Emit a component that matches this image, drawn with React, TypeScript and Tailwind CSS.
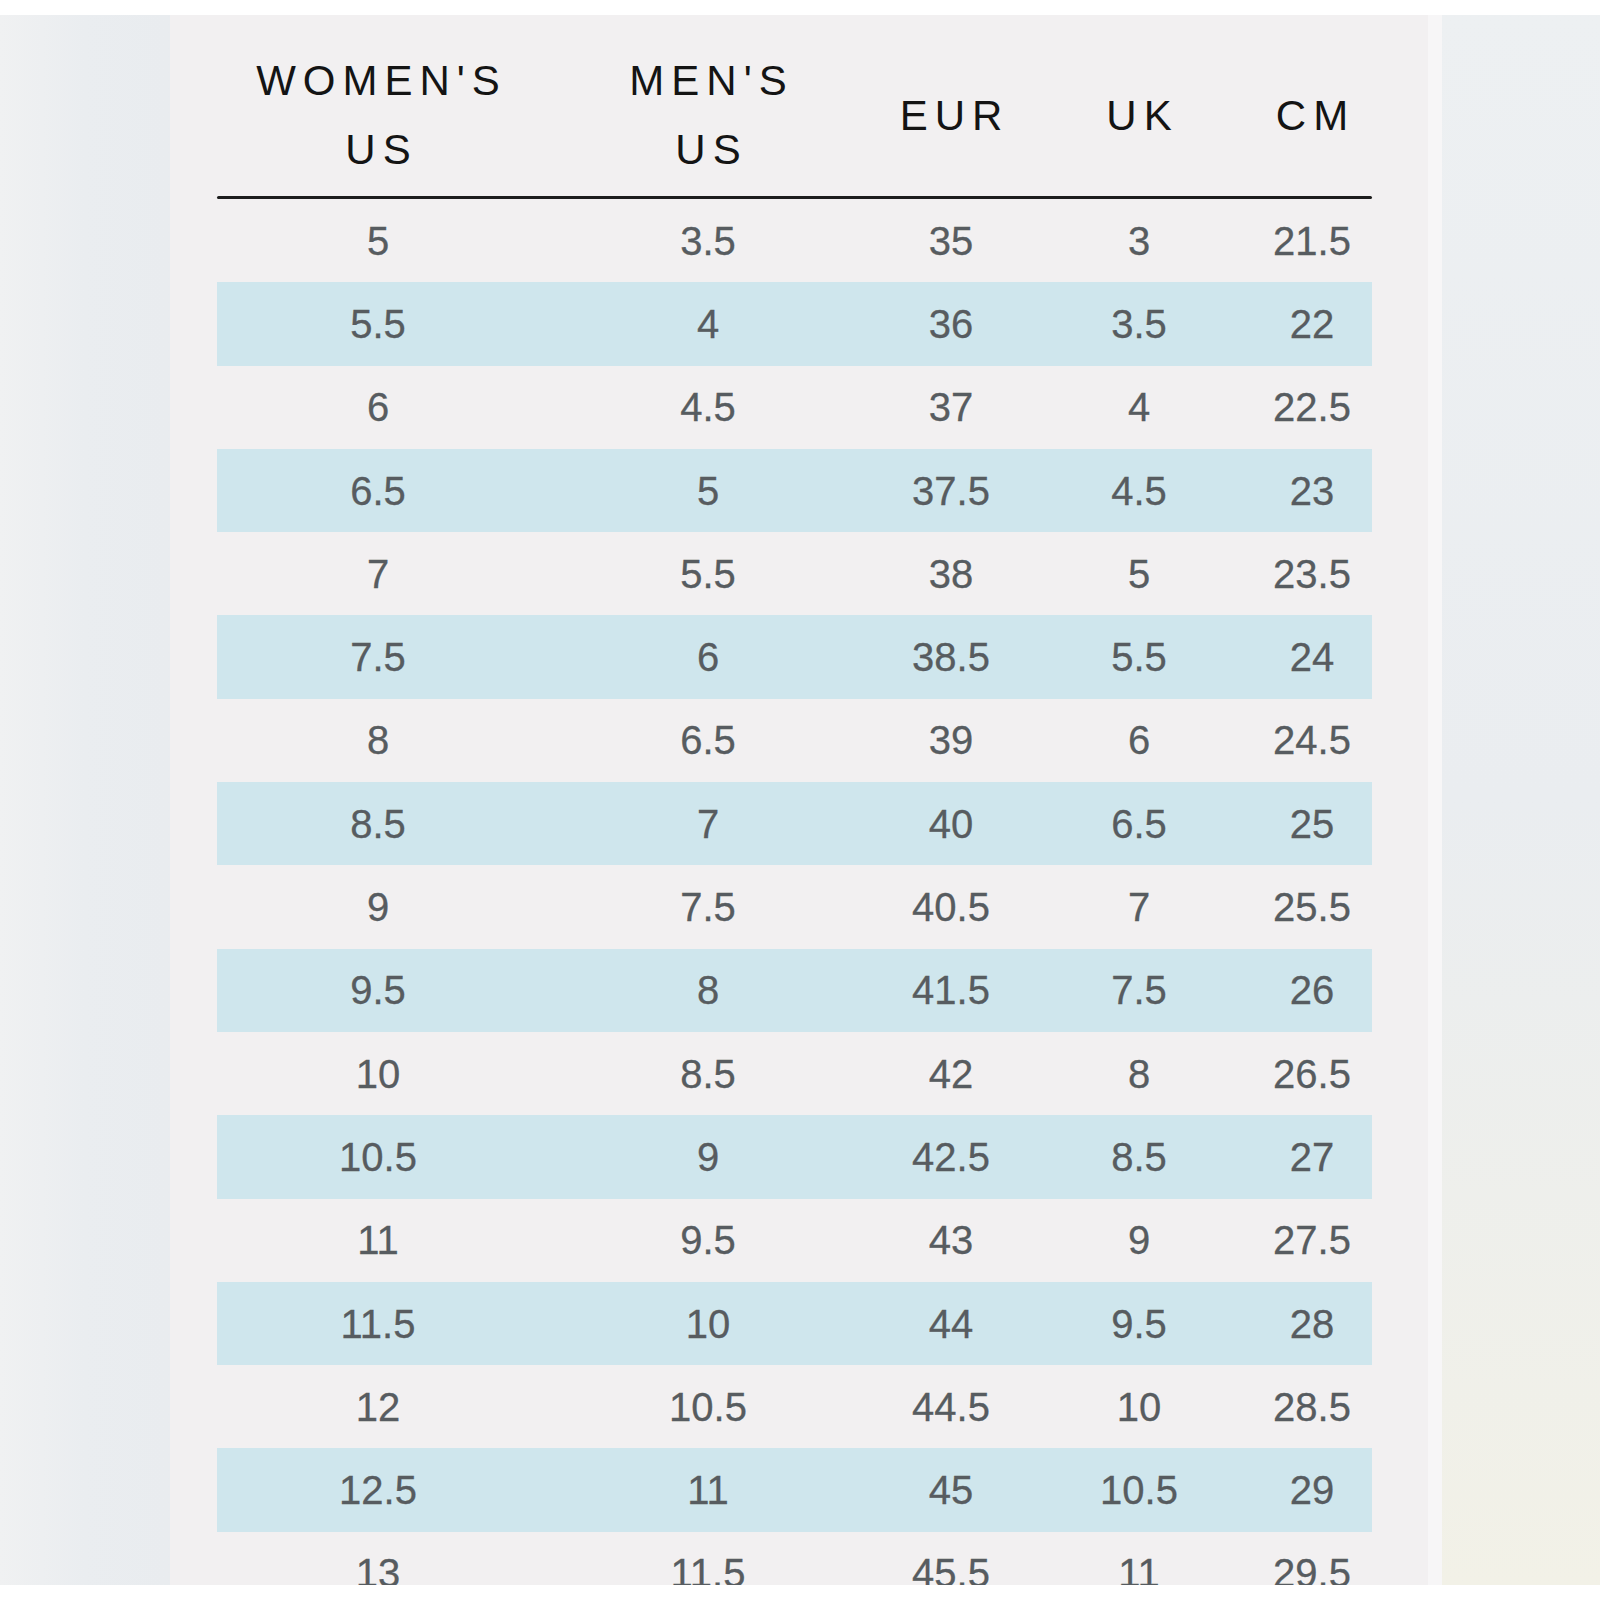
const HEADERS: string[][] = [["WOMEN'S", "US"], ["MEN'S", "US"], ["EUR"], ["UK"], ["CM"]];

const ROWS: string[][] = [
  ["5", "3.5", "35", "3", "21.5"],
  ["5.5", "4", "36", "3.5", "22"],
  ["6", "4.5", "37", "4", "22.5"],
  ["6.5", "5", "37.5", "4.5", "23"],
  ["7", "5.5", "38", "5", "23.5"],
  ["7.5", "6", "38.5", "5.5", "24"],
  ["8", "6.5", "39", "6", "24.5"],
  ["8.5", "7", "40", "6.5", "25"],
  ["9", "7.5", "40.5", "7", "25.5"],
  ["9.5", "8", "41.5", "7.5", "26"],
  ["10", "8.5", "42", "8", "26.5"],
  ["10.5", "9", "42.5", "8.5", "27"],
  ["11", "9.5", "43", "9", "27.5"],
  ["11.5", "10", "44", "9.5", "28"],
  ["12", "10.5", "44.5", "10", "28.5"],
  ["12.5", "11", "45", "10.5", "29"],
  ["13", "11.5", "45.5", "11", "29.5"],
];

const cols = "grid grid-cols-[322px_338px_148px_228px_118px]";

const SizeTable = () => (
  <div className="w-[1155px] font-['Liberation_Sans',Arial,sans-serif]">
    <div className={`${cols} pt-[31px] pb-[12px]`}>
      {HEADERS.map((h, i) => (
        <div
          key={i}
          className="h-[138px] flex flex-col items-center justify-center pl-[7px] text-[42px] leading-[69px] tracking-[7px] text-[#141414]"
        >
          {h.map((line) => (
            <span key={line}>{line}</span>
          ))}
        </div>
      ))}
    </div>
    <div className="h-[3px] bg-[#1d1d1d] rounded-full" />
    {ROWS.map((row, r) => (
      <div
        key={r}
        className={`${cols} h-[83.3px] ${r % 2 === 1 ? "bg-[#cfe6ed]" : ""}`}
      >
        {row.map((v, c) => (
          <div key={c} className="flex items-center justify-center text-[40px] leading-none text-[#575c60] [-webkit-text-stroke:0.3px_#575c60]">
            {v}
          </div>
        ))}
      </div>
    ))}
  </div>
);

export default function App() {
  return (
    <div className="w-[1600px] h-[1600px] bg-white">
      <div className="mt-[15px] h-[1570px] overflow-hidden flex bg-gradient-to-b from-[#edf0f2] via-[#eaedf0] to-[#f2f1e7]">
        <div className="w-[170px] bg-gradient-to-r from-[#f0f1f2] via-[#eaedf0] to-[#e9ecef]" />
        <div className="w-[1258px] bg-[#f2f0f1] pl-[47px]">
          <SizeTable />
        </div>
        <div className="w-[14px] bg-[#f7f6f7]" />
        <div className="flex-1" />
      </div>
    </div>
  );
}
